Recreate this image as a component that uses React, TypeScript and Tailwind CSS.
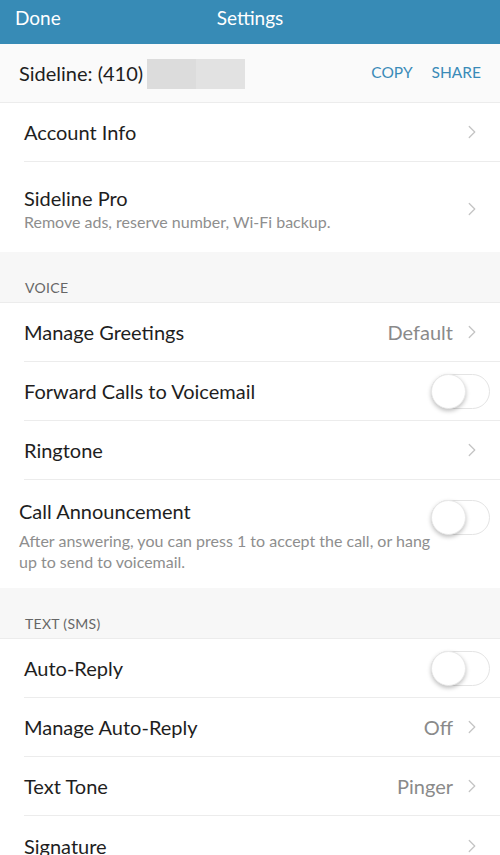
import { ChevronRight } from "lucide-react";

type Row = {
  title: string;
  subtitle?: string;
  value?: string;
  toggle?: boolean;
  chevron?: boolean;
  inset?: boolean;
  tall?: boolean;
};

function Toggle({ className = "" }: { className?: string }) {
  return (
    <div className={`relative w-[59px] h-[35px] rounded-full border border-[#e4e4e4] bg-white shrink-0 ${className}`}>
      <div className="absolute left-[-1px] top-[-1px] w-[35px] h-[35px] rounded-full bg-white shadow-[0_2px_4px_rgba(0,0,0,0.25)] border border-[#e8e8e8]" />
    </div>
  );
}

function SettingRow({ row, last }: { row: Row; last?: boolean }) {
  let height = "h-[59px] items-center";
  if (row.subtitle && row.tall) height = "pt-[18px] pb-[16px] items-start";
  else if (row.subtitle) height = "h-[90px] pt-[3px] items-center";

  return (
    <div className={row.inset ? "pl-[19px] bg-white" : "pl-[24px] bg-white"}>
      <div className={`flex pr-[10px] ${height} ${last ? "" : "border-b border-[#ececec]"}`}>
        <div className="flex-1 min-w-0">
          <div className="text-[20px] leading-[26px] text-[#1e1e1e]">{row.title}</div>
          {row.subtitle && (
            <div
              className={`text-[16px] leading-[21px] text-[#8e8e8e] ${row.tall ? "mt-[6px] mr-[-8px]" : "pr-3"}`}
            >
              {row.subtitle}
            </div>
          )}
        </div>
        {row.value && <span className="text-[20px] text-[#8a8a8a] mr-[8px]">{row.value}</span>}
        {row.toggle && <Toggle className={row.tall ? "mt-[2px]" : ""} />}
        {row.chevron && <ChevronRight size={22} strokeWidth={1.4} className="text-[#c4c4c4] mr-[7px]" />}
      </div>
    </div>
  );
}

function SectionHeader({ label }: { label: string }) {
  return (
    <div className="h-[51px] bg-[#f7f7f7] border-b border-[#ececec] flex items-end pl-[25px] pb-[4px]">
      <span className="text-[14px] text-[#666] tracking-[0.3px]">{label}</span>
    </div>
  );
}

export default function App() {
  const voice: Row[] = [
    { title: "Manage Greetings", value: "Default", chevron: true },
    { title: "Forward Calls to Voicemail", toggle: true },
    { title: "Ringtone", chevron: true },
  ];
  const text: Row[] = [
    { title: "Auto-Reply", toggle: true },
    { title: "Manage Auto-Reply", value: "Off", chevron: true },
    { title: "Text Tone", value: "Pinger", chevron: true },
    { title: "Signature", chevron: true },
  ];

  return (
    <div className="w-[500px] h-[855px] overflow-hidden bg-white" style={{ fontFamily: "Lato, 'Noto Sans', sans-serif" }}>
      {/* Nav bar */}
      <div className="h-[44px] bg-[#378bb6] flex items-center pb-[7px] relative text-white text-[19px]">
        <span className="pl-[15px]">Done</span>
        <span className="absolute left-0 right-0 text-center pointer-events-none">Settings</span>
      </div>

      {/* Number row */}
      <div className="h-[59px] bg-[#fafafa] border-b border-[#ececec] flex items-center pl-[19px] pr-[19px]">
        <span className="text-[20px] text-[#1e1e1e]">Sideline: (410)</span>
        <div className="flex ml-[4px] mt-[2px]">
          <div className="w-[49px] h-[30px] bg-[#dcdcdc]" />
          <div className="w-[49px] h-[30px] bg-[#e2e2e2]" />
        </div>
        <div className="flex-1" />
        <span className="text-[15.5px] text-[#3a8bb8] mr-[19px]">COPY</span>
        <span className="text-[15.5px] text-[#3a8bb8]">SHARE</span>
      </div>

      <SettingRow row={{ title: "Account Info", chevron: true }} />
      <SettingRow
        row={{ title: "Sideline Pro", subtitle: "Remove ads, reserve number, Wi-Fi backup.", chevron: true }}
        last
      />

      <SectionHeader label="VOICE" />
      {voice.map((r) => (
        <SettingRow key={r.title} row={r} />
      ))}
      <SettingRow
        row={{
          title: "Call Announcement",
          subtitle: "After answering, you can press 1 to accept the call, or hang up  to send to voicemail.",
          toggle: true,
          inset: true,
          tall: true,
        }}
        last
      />

      <SectionHeader label="TEXT (SMS)" />
      {text.map((r, i) => (
        <SettingRow key={r.title} row={r} last={i === text.length - 1} />
      ))}
    </div>
  );
}
